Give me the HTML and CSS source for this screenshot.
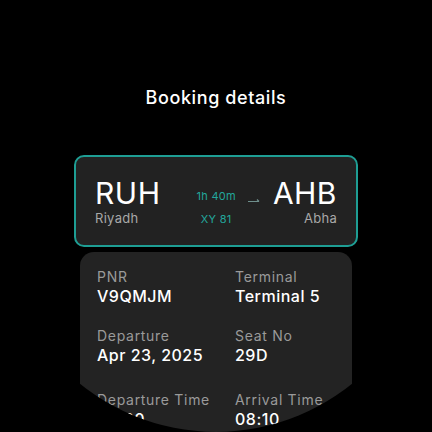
FILE: index.html
```html
<!DOCTYPE html>
<html>
<head>
<meta charset="utf-8">
<link rel="stylesheet" href="styles.css">
</head>
<body>
<div class="screen">
  <h1 class="title">Booking details</h1>
  <div class="flight">
    <div class="end">
      <div class="code">RUH</div>
      <div class="city">Riyadh</div>
    </div>
    <div class="mid">
      <div class="dur">1h 40m</div>
      <div class="num">XY 81</div>
    </div>
    <div class="arrow">
      <svg width="12" height="6" viewBox="0 0 12 6"><path d="M0 4.5H11M9 2.5L11 4.5" stroke="#6f8f8c" stroke-width="1.2" fill="none"/></svg>
    </div>
    <div class="end right">
      <div class="code">AHB</div>
      <div class="city">Abha</div>
    </div>
  </div>
  <div class="details">
    <div class="item"><div class="label">PNR</div><div class="value">V9QMJM</div></div>
    <div class="item"><div class="label">Terminal</div><div class="value">Terminal 5</div></div>
    <div class="item"><div class="label">Departure</div><div class="value">Apr 23, 2025</div></div>
    <div class="item"><div class="label">Seat No</div><div class="value">29D</div></div>
    <div class="item row3"><div class="label">Departure Time</div><div class="value">06:30</div></div>
    <div class="item row3"><div class="label">Arrival Time</div><div class="value">08:10</div></div>
  </div>
</div>
</body>
</html>
```
FILE: styles.css
```css
html, body {
  margin: 0;
  padding: 0;
  background: #000;
}
.screen {
  width: 432px;
  height: 432px;
  border-radius: 50%;
  overflow: hidden;
  background: #000;
  display: flex;
  flex-direction: column;
  align-items: center;
  font-family: Inter, "DejaVu Sans", sans-serif;
  color: #fff;
}
.title {
  margin: 87px 0 0;
  font-size: 18px;
  line-height: 22px;
  font-weight: 500;
  letter-spacing: 0.6px;
}
.flight {
  margin-top: 46px;
  width: 284px;
  height: 92px;
  box-sizing: border-box;
  border: 2px solid #1e9e94;
  border-radius: 10px;
  background: #222;
  display: flex;
  align-items: center;
  padding: 0 19px;
}
.end {
  display: flex;
  flex-direction: column;
}
.end.right {
  align-items: flex-end;
  margin-left: auto;
}
.code {
  font-size: 30px;
  line-height: 32px;
  font-weight: 400;
  letter-spacing: 0.5px;
}
.city {
  font-size: 13px;
  line-height: 16px;
  color: #a8a8a8;
  margin-top: 1px;
  letter-spacing: 0.3px;
}
.mid {
  display: flex;
  flex-direction: column;
  align-items: center;
  margin-left: 36px;
  margin-top: 12px;
  color: #22a79c;
  font-size: 11px;
  letter-spacing: 0.3px;
}
.dur { line-height: 14px; }
.num { line-height: 14px; margin-top: 9px; }
.arrow {
  margin-left: 12px;
  margin-top: -2px;
  display: flex;
}
.details {
  margin-top: 5px;
  width: 272px;
  flex: 1;
  box-sizing: border-box;
  background: #232323;
  border-radius: 14px 14px 0 0;
  padding: 16px 17px 0;
  display: grid;
  grid-template-columns: 138px 1fr;
  grid-auto-rows: min-content;
  row-gap: 21px;
}
.row3 {
  margin-top: 5px;
}
.label {
  font-size: 14px;
  line-height: 18px;
  color: #9a9a9a;
  letter-spacing: 0.7px;
}
.value {
  font-size: 16px;
  line-height: 20px;
  font-weight: 500;
  color: #fff;
  letter-spacing: 0.5px;
}
```
